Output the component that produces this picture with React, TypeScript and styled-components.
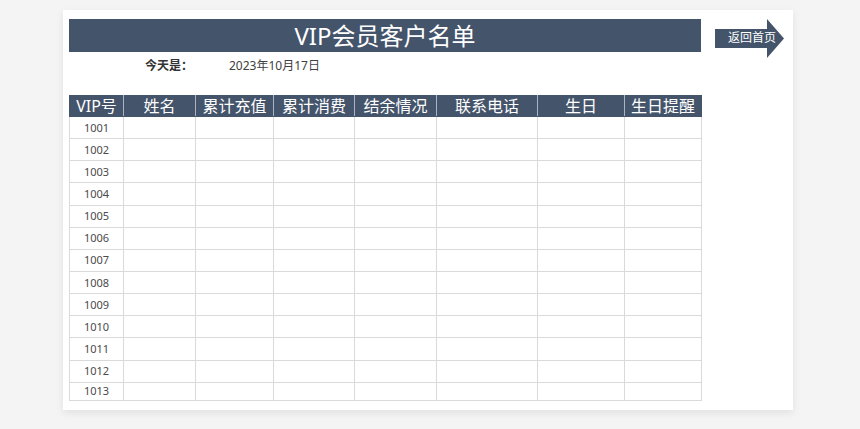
import React from "react";
import styled, { createGlobalStyle } from "styled-components";

const Global = createGlobalStyle`
  html, body { margin: 0; padding: 0; background: #f4f4f5; }
  body { font-family: "Noto Sans", "Noto Sans CJK SC", sans-serif; }
`;

const Page = styled.div`
  padding: 10px 0 0 63px;
  height: 429px;
  box-sizing: border-box;
`;

const Card = styled.div`
  width: 730px;
  height: 400px;
  background: #ffffff;
  box-shadow: 0 3px 8px rgba(0, 0, 0, 0.08);
  box-sizing: border-box;
  padding: 9px 0 0 6px;
  display: flex;
  gap: 14px;
`;

const Main = styled.div`
  width: 632px;
  display: flex;
  flex-direction: column;
`;

const TitleBar = styled.div`
  height: 33px;
  background: #44546a;
  color: #ffffff;
  font-family: "Noto Sans", "Noto Sans CJK SC", sans-serif;
  font-size: 24px;
  line-height: 33px;
  text-align: center;
`;

const DateRow = styled.div`
  height: 43px;
  display: flex;
  align-items: flex-start;
  padding: 5px 0 0 76px;
  box-sizing: border-box;
  font-size: 12px;
  line-height: 18px;
  color: #333;
`;

const DateLabel = styled.span`
  font-weight: 700;
  width: 84px;
`;

const DateValue = styled.span`
  color: #404040;
`;

const Table = styled.table`
  border-collapse: collapse;
  table-layout: fixed;
  width: 632px;
`;

const HeadCell = styled.th`
  background: #44546a;
  color: #fff;
  font-weight: 400;
  font-size: 16px;
  height: 21px;
  padding: 0;
  line-height: 20px;
  border-left: 1px solid #a9b4c4;
  border-bottom: 1px solid #44546a;
  &:first-child { border-left: 1px solid #44546a; }
  &:last-child { border-right: 1px solid #44546a; }
`;

const Row = styled.tr<{ $short?: boolean }>`
  height: ${(p) => (p.$short ? "18px" : "22.15px")};
`;

const Cell = styled.td`
  border: 1px solid #dadada;
  padding: 0;
  font-size: 11px;
  color: #4a4a4a;
  text-align: center;
  line-height: 14px;
`;

const ReturnButton = styled.div`
  position: relative;
  width: 70px;
  height: 39px;
  cursor: pointer;
`;

const ReturnLabel = styled.span`
  position: absolute;
  left: 13px;
  top: 11px;
  color: #fff;
  font-size: 12px;
  line-height: 16px;
  white-space: nowrap;
`;

const widths = [54, 72, 78, 81, 82, 101, 87, 77];
const heads = ["VIP号", "姓名", "累计充值", "累计消费", "结余情况", "联系电话", "生日", "生日提醒"];
const ids = Array.from({ length: 13 }, (_, i) => 1001 + i);

export default function App() {
  return (
    <>
      <Global />
      <Page>
        <Card>
          <Main>
            <TitleBar>VIP会员客户名单</TitleBar>
            <DateRow>
              <DateLabel>今天是：</DateLabel>
              <DateValue>2023年10月17日</DateValue>
            </DateRow>
            <Table>
              <colgroup>
                {widths.map((w, i) => (
                  <col key={i} style={{ width: w }} />
                ))}
              </colgroup>
              <thead>
                <tr>
                  {heads.map((h) => (
                    <HeadCell key={h}>{h}</HeadCell>
                  ))}
                </tr>
              </thead>
              <tbody>
                {ids.map((id, r) => (
                  <Row key={id} $short={r === ids.length - 1}>
                    {widths.map((_, c) => (
                      <Cell key={c}>{c === 0 ? id : ""}</Cell>
                    ))}
                  </Row>
                ))}
              </tbody>
            </Table>
          </Main>
          <ReturnButton>
            <svg width="70" height="39" viewBox="0 0 70 39" style={{ position: "absolute", left: 0, top: 0 }}>
              <polygon points="0,10 52,10 52,0 69,19.5 52,39 52,29 0,29" fill="#44546a" />
            </svg>
            <ReturnLabel>返回首页</ReturnLabel>
          </ReturnButton>
        </Card>
      </Page>
    </>
  );
}
